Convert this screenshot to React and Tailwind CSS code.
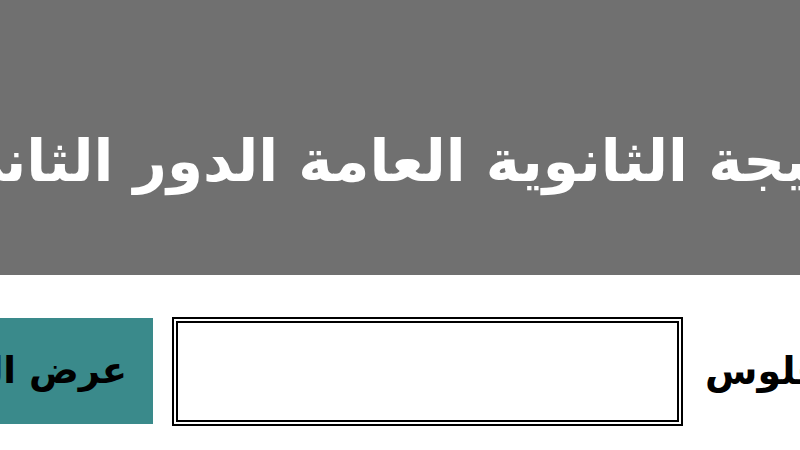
export default function App() {
  const arabic = { fontFamily: '"DejaVu Sans", "Noto Sans", sans-serif' };
  return (
    <div className="w-[800px] h-[450px] overflow-hidden bg-white" style={arabic}>
      {/* header banner */}
      <div className="h-[275px] bg-[#707070] flex justify-center pt-[118px] overflow-hidden">
        <h1 dir="rtl" className="shrink-0 text-white font-bold text-[58px] leading-[86px] whitespace-nowrap">
          نتيجة الثانوية العامة الدور الثاني
        </h1>
      </div>

      {/* seat number form */}
      <div className="flex items-center mt-[41px] h-[110px] whitespace-nowrap">
        <button
          dir="rtl"
          className="shrink-0 w-[300px] ml-[-147px] h-[106px] bg-[#3a8a8b] text-black font-bold text-[37px] flex items-center justify-start pr-[26px]"
        >
          عرض النتيجة
        </button>
        <div className="shrink-0 ml-[19px] w-[511px] h-[109px] border-[6px] border-double border-black bg-white" />
        <label dir="rtl" className="shrink-0 ml-[22px] text-black font-bold text-[38px]">
          رقم الجلوس
        </label>
      </div>
    </div>
  );
}
